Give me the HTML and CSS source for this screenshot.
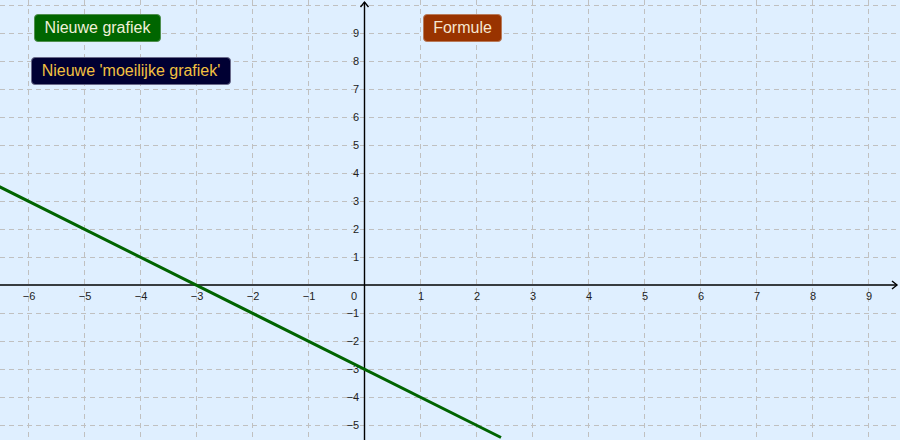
FILE: index.html
```html
<!DOCTYPE html>
<html>
<head>
<meta charset="utf-8">
<link rel="stylesheet" href="styles.css">
</head>
<body>
<div class="canvas">
<svg class="graph" width="900" height="440" viewBox="0 0 900 440" xmlns="http://www.w3.org/2000/svg">
  <rect x="0" y="0" width="900" height="440" fill="#dfefff"/>
  <g class="grid" stroke="#c0c0c0" stroke-width="1" stroke-dasharray="5 4">
    <line x1="28.5" y1="0" x2="28.5" y2="440"/>
    <line x1="84.5" y1="0" x2="84.5" y2="440"/>
    <line x1="140.5" y1="0" x2="140.5" y2="440"/>
    <line x1="196.5" y1="0" x2="196.5" y2="440"/>
    <line x1="252.5" y1="0" x2="252.5" y2="440"/>
    <line x1="308.5" y1="0" x2="308.5" y2="440"/>
    <line x1="420.5" y1="0" x2="420.5" y2="440"/>
    <line x1="476.5" y1="0" x2="476.5" y2="440"/>
    <line x1="532.5" y1="0" x2="532.5" y2="440"/>
    <line x1="588.5" y1="0" x2="588.5" y2="440"/>
    <line x1="644.5" y1="0" x2="644.5" y2="440"/>
    <line x1="700.5" y1="0" x2="700.5" y2="440"/>
    <line x1="756.5" y1="0" x2="756.5" y2="440"/>
    <line x1="812.5" y1="0" x2="812.5" y2="440"/>
    <line x1="868.5" y1="0" x2="868.5" y2="440"/>
    <line x1="0" y1="5.5" x2="900" y2="5.5"/>
    <line x1="0" y1="33.5" x2="900" y2="33.5"/>
    <line x1="0" y1="61.5" x2="900" y2="61.5"/>
    <line x1="0" y1="89.5" x2="900" y2="89.5"/>
    <line x1="0" y1="117.5" x2="900" y2="117.5"/>
    <line x1="0" y1="145.5" x2="900" y2="145.5"/>
    <line x1="0" y1="173.5" x2="900" y2="173.5"/>
    <line x1="0" y1="201.5" x2="900" y2="201.5"/>
    <line x1="0" y1="229.5" x2="900" y2="229.5"/>
    <line x1="0" y1="257.5" x2="900" y2="257.5"/>
    <line x1="0" y1="313.5" x2="900" y2="313.5"/>
    <line x1="0" y1="341.5" x2="900" y2="341.5"/>
    <line x1="0" y1="369.5" x2="900" y2="369.5"/>
    <line x1="0" y1="397.5" x2="900" y2="397.5"/>
    <line x1="0" y1="425.5" x2="900" y2="425.5"/>
  </g>
  <g class="axes" stroke="#000" stroke-width="1.4" fill="none">
    <line x1="0" y1="285" x2="897" y2="285"/>
    <line x1="364.5" y1="440" x2="364.5" y2="2"/>
    <polyline points="892,281 897,285 892,289"/>
    <polyline points="360.5,7 364.5,2 368.5,7"/>
  </g>
  <g class="xlabels" text-anchor="middle">
    <text x="29" y="300">−6</text>
    <text x="85" y="300">−5</text>
    <text x="141" y="300">−4</text>
    <text x="197" y="300">−3</text>
    <text x="253" y="300">−2</text>
    <text x="309" y="300">−1</text>
    <text x="354" y="300">0</text>
    <text x="421" y="300">1</text>
    <text x="477" y="300">2</text>
    <text x="533" y="300">3</text>
    <text x="589" y="300">4</text>
    <text x="645" y="300">5</text>
    <text x="701" y="300">6</text>
    <text x="757" y="300">7</text>
    <text x="813" y="300">8</text>
    <text x="869" y="300">9</text>
  </g>
  <g class="ylabels" text-anchor="end">
    <text x="359" y="37">9</text>
    <text x="359" y="65">8</text>
    <text x="359" y="93">7</text>
    <text x="359" y="121">6</text>
    <text x="359" y="149">5</text>
    <text x="359" y="177">4</text>
    <text x="359" y="205">3</text>
    <text x="359" y="233">2</text>
    <text x="359" y="261">1</text>
    <text x="359" y="317">−1</text>
    <text x="359" y="345">−2</text>
    <text x="359" y="373">−3</text>
    <text x="359" y="401">−4</text>
    <text x="359" y="429">−5</text>
  </g>
  <line x1="-2" y1="186" x2="501" y2="437.5" stroke="#006400" stroke-width="3"/>
</svg>
<button class="btn btn-green">Nieuwe grafiek</button>
<button class="btn btn-navy">Nieuwe 'moeilijke grafiek'</button>
<button class="btn btn-brown">Formule</button>
</div>
</body>
</html>
```
FILE: styles.css
```css
html, body {
  margin: 0;
  padding: 0;
  background: #dfefff;
}
.canvas {
  position: relative;
  width: 900px;
  height: 440px;
  overflow: hidden;
}
.graph {
  display: block;
}
.graph text {
  font-family: "Liberation Sans", Arial, sans-serif;
  font-size: 11px;
  fill: #222;
}
.btn {
  position: absolute;
  box-sizing: border-box;
  height: 28px;
  padding: 0;
  border-radius: 4px;
  border: 1px solid #9a9a9a;
  font-family: "Liberation Sans", Arial, sans-serif;
  font-size: 16px;
  line-height: 26px;
  text-align: center;
  cursor: pointer;
}
.btn-green {
  left: 34px;
  top: 14px;
  width: 127px;
  background: #006600;
  color: #f0f0d8;
  border-color: #4f8f4f;
}
.btn-navy {
  left: 31px;
  top: 57px;
  width: 200px;
  background: #000033;
  color: #f2c040;
  border-color: #6a6a8a;
}
.btn-brown {
  left: 423px;
  top: 14px;
  width: 79px;
  background: #993300;
  color: #f6e6d0;
  border-color: #b87a5a;
}
```
